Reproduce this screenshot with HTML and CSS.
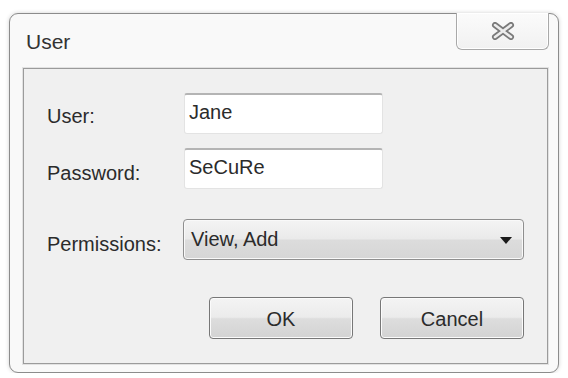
FILE: index.html
```html
<!DOCTYPE html>
<html lang="en">
<head>
  <meta charset="UTF-8">
  <meta name="viewport" content="width=device-width, initial-scale=1.0">
  <title>User</title>
  <link rel="stylesheet" href="styles.css">
</head>
<body>
  <div class="dlg-window">
    <div class="dlg-titlebar">
      <span class="dlg-title">User</span>
      <a class="dlg-close" title="Close">
        <svg width="26" height="18" viewBox="0 0 26 18">
          <path d="M5 3 L21 15 M21 3 L5 15" stroke="#7a7a7a" stroke-width="6" stroke-linecap="round" fill="none"/>
          <path d="M5 3 L21 15 M21 3 L5 15" stroke="#ededed" stroke-width="2.6" stroke-linecap="round" fill="none"/>
        </svg>
      </a>
    </div>

    <div class="dlg-client">
      <div class="dlg-row">
        <label class="dlg-label" for="userInput">User:</label>
        <input type="text" class="dlg-input" id="userInput" value="Jane">
      </div>

      <div class="dlg-row dlg-row-last">
        <label class="dlg-label dlg-label-low" for="passInput">Password:</label>
        <input type="text" class="dlg-input" id="passInput" value="SeCuRe">
      </div>

      <div class="dlg-row">
        <span class="dlg-label dlg-label-combo">Permissions:</span>
        <div class="dlg-combo">
          <span>View, Add</span>
          <span class="dlg-combo-arrow"></span>
        </div>
      </div>

      <div class="dlg-buttons">
        <button class="dlg-btn">OK</button>
        <button class="dlg-btn">Cancel</button>
      </div>
    </div>
  </div>
</body>
</html>
```

FILE: styles.css
```css
* {
  box-sizing: border-box;
}

body {
  margin: 0;
  background-color: #ffffff;
  font-family: "Liberation Sans", Arial, sans-serif;
  color: #2b2b2b;
}

.dlg-window {
  margin: 13px 0 0 9px;
  width: 550px;
  height: 360px;
  border: 1px solid #8c8c8c;
  border-radius: 9px;
  background-color: #f9f9f9;
  box-shadow: 0 0 4px rgba(0, 0, 0, 0.18);
  display: flex;
  flex-direction: column;
}

.dlg-titlebar {
  height: 54px;
  display: flex;
  align-items: center;
  justify-content: space-between;
  padding-left: 16px;
}

.dlg-title {
  font-size: 21px;
  color: #333;
  padding-top: 2px;
}

.dlg-close {
  align-self: flex-start;
  margin-top: -1px;
  margin-right: 9px;
  width: 93px;
  height: 37px;
  border: 1px solid #a9a9a9;
  border-top: none;
  border-radius: 0 0 6px 6px;
  background: linear-gradient(#fbfbfb, #f1f1f1);
  box-shadow: inset 0 0 0 1px #ffffff;
  display: flex;
  align-items: center;
  justify-content: center;
  cursor: pointer;
}

.dlg-client {
  flex: 1;
  margin: 0 10px 8px 13px;
  border: 1px solid #9b9b9b;
  box-shadow: 0 0 0 1px #e2e2e2;
  background-color: #f0f0f0;
  padding: 24px 23px 0 23px;
}

.dlg-row {
  display: flex;
  align-items: center;
  height: 41px;
  margin-bottom: 14px;
}

.dlg-row-last {
  margin-bottom: 30px;
}

.dlg-label {
  width: 137px;
  font-size: 20px;
  padding-top: 5px;
  color: #2b2b2b;
}

.dlg-label-low {
  padding-top: 9px;
}

.dlg-label-combo {
  width: 136px;
  padding-top: 9px;
}

.dlg-input {
  width: 199px;
  height: 41px;
  border: 1px solid #e3e3e3;
  border-top: 2px solid #b4b4b4;
  border-radius: 3px;
  background-color: #ffffff;
  font-family: "Liberation Sans", Arial, sans-serif;
  font-size: 20px;
  color: #2b2b2b;
  padding: 0 4px 3px 4px;
  outline: none;
}

.dlg-combo {
  flex: 1;
  height: 41px;
  border: 1px solid #8f8f8f;
  border-radius: 4px;
  background: linear-gradient(#f4f4f4 0%, #eaeaea 48%, #dcdcdc 52%, #d6d6d6 100%);
  box-shadow: inset 0 0 0 1px #f9f9f9;
  display: flex;
  align-items: center;
  justify-content: space-between;
  padding: 0 11px 0 7px;
  font-size: 20px;
  color: #2b2b2b;
}

.dlg-combo-arrow {
  width: 0;
  height: 0;
  border-left: 6px solid transparent;
  border-right: 6px solid transparent;
  border-top: 7px solid #1a1a1a;
  margin-top: 2px;
}

.dlg-buttons {
  display: flex;
  justify-content: flex-end;
  gap: 27px;
  margin-top: 37px;
}

.dlg-btn {
  width: 144px;
  height: 42px;
  border: 1px solid #777;
  border-radius: 4px;
  background: linear-gradient(#f4f4f4 0%, #ebebeb 48%, #dddddd 52%, #d3d3d3 100%);
  box-shadow: inset 0 0 0 1px #fbfbfb;
  font-family: "Liberation Sans", Arial, sans-serif;
  font-size: 20px;
  color: #2b2b2b;
  padding-top: 3px;
  cursor: pointer;
}
```
